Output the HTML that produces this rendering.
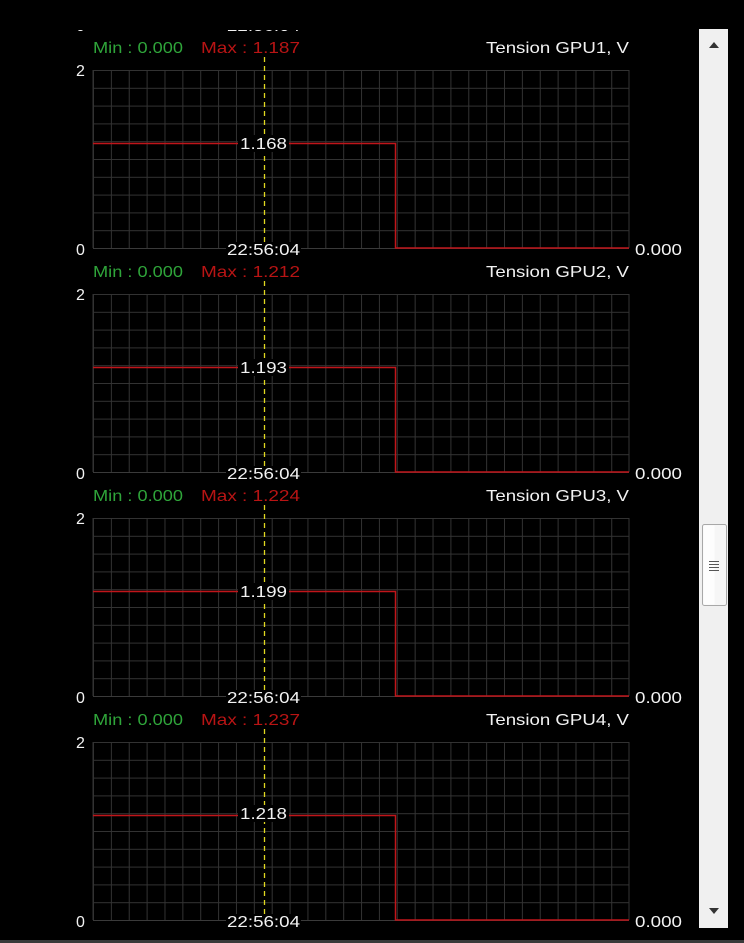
<!DOCTYPE html>
<html><head><meta charset="utf-8"><style>
html,body{margin:0;padding:0;background:#000;width:744px;height:943px;overflow:hidden}
svg{display:block}
text{font-family:"Liberation Sans",Arial,sans-serif;font-size:16px}
.mn{fill:#2fa53a}.mx{fill:#b81414}.w{fill:#f2f2f2}
</style></head><body>
<svg width="744" height="943" viewBox="0 0 744 943" xmlns="http://www.w3.org/2000/svg">
<defs>
<pattern id="g" x="93" y="70" width="17.87" height="17.8" patternUnits="userSpaceOnUse">
<path d="M0.5 0V17.8M0 0.5H17.87" stroke="#333" stroke-width="1" fill="none"/>
</pattern>
<clipPath id="c"><rect x="0" y="30" width="700" height="898"/></clipPath>
<g id="p">
<rect x="93" y="70" width="536" height="178" fill="url(#g)"/>
<line x1="93" y1="70" x2="93" y2="248" stroke="#333"/>
<line x1="629" y1="70" x2="629" y2="248" stroke="#333"/>
<line x1="93" y1="248.5" x2="629" y2="248.5" stroke="#3a3a3a"/>
<line x1="264.5" y1="57" x2="264.5" y2="246" stroke="#e0d820" stroke-width="1.3" stroke-dasharray="5,4"/>
<path d="M93 143.5H395.5V248H629" stroke="#c0151a" stroke-width="1.5" fill="none"/>
</g>
</defs>
<g clip-path="url(#c)">
<g transform="translate(0,-224)"><use href="#p"/>
<rect x="226" y="242" width="75" height="16" fill="#000"/>
<text x="76" y="255" class="w">0</text><text x="227" y="255" class="w" textLength="73" lengthAdjust="spacingAndGlyphs">22:56:04</text></g>

<use href="#p"/>
<text x="93" y="53" class="mn" textLength="90" lengthAdjust="spacingAndGlyphs">Min : 0.000</text><text x="201" y="53" class="mx" textLength="99" lengthAdjust="spacingAndGlyphs">Max : 1.187</text>
<text x="486" y="53" class="w" textLength="143" lengthAdjust="spacingAndGlyphs">Tension GPU1, V</text>
<text x="76" y="76" class="w">2</text>
<rect x="238" y="135" width="51" height="17" fill="#000"/><text x="240" y="149" class="w" textLength="47" lengthAdjust="spacingAndGlyphs">1.168</text>
<rect x="226" y="242" width="75" height="16" fill="#000"/>
<text x="76" y="255" class="w">0</text><text x="227" y="255" class="w" textLength="73" lengthAdjust="spacingAndGlyphs">22:56:04</text><text x="635" y="255" class="w" textLength="47" lengthAdjust="spacingAndGlyphs">0.000</text>

<g transform="translate(0,224)"><use href="#p"/>
<text x="93" y="53" class="mn" textLength="90" lengthAdjust="spacingAndGlyphs">Min : 0.000</text><text x="201" y="53" class="mx" textLength="99" lengthAdjust="spacingAndGlyphs">Max : 1.212</text>
<text x="486" y="53" class="w" textLength="143" lengthAdjust="spacingAndGlyphs">Tension GPU2, V</text>
<text x="76" y="76" class="w">2</text>
<rect x="238" y="135" width="51" height="17" fill="#000"/><text x="240" y="149" class="w" textLength="47" lengthAdjust="spacingAndGlyphs">1.193</text>
<rect x="226" y="242" width="75" height="16" fill="#000"/>
<text x="76" y="255" class="w">0</text><text x="227" y="255" class="w" textLength="73" lengthAdjust="spacingAndGlyphs">22:56:04</text><text x="635" y="255" class="w" textLength="47" lengthAdjust="spacingAndGlyphs">0.000</text></g>

<g transform="translate(0,448)"><use href="#p"/>
<text x="93" y="53" class="mn" textLength="90" lengthAdjust="spacingAndGlyphs">Min : 0.000</text><text x="201" y="53" class="mx" textLength="99" lengthAdjust="spacingAndGlyphs">Max : 1.224</text>
<text x="486" y="53" class="w" textLength="143" lengthAdjust="spacingAndGlyphs">Tension GPU3, V</text>
<text x="76" y="76" class="w">2</text>
<rect x="238" y="135" width="51" height="17" fill="#000"/><text x="240" y="149" class="w" textLength="47" lengthAdjust="spacingAndGlyphs">1.199</text>
<rect x="226" y="242" width="75" height="16" fill="#000"/>
<text x="76" y="255" class="w">0</text><text x="227" y="255" class="w" textLength="73" lengthAdjust="spacingAndGlyphs">22:56:04</text><text x="635" y="255" class="w" textLength="47" lengthAdjust="spacingAndGlyphs">0.000</text></g>

<g transform="translate(0,672)"><use href="#p"/>
<text x="93" y="53" class="mn" textLength="90" lengthAdjust="spacingAndGlyphs">Min : 0.000</text><text x="201" y="53" class="mx" textLength="99" lengthAdjust="spacingAndGlyphs">Max : 1.237</text>
<text x="486" y="53" class="w" textLength="143" lengthAdjust="spacingAndGlyphs">Tension GPU4, V</text>
<text x="76" y="76" class="w">2</text>
<rect x="238" y="133" width="51" height="17" fill="#000"/><text x="240" y="147" class="w" textLength="47" lengthAdjust="spacingAndGlyphs">1.218</text>
<rect x="226" y="242" width="75" height="16" fill="#000"/>
<text x="76" y="255" class="w">0</text><text x="227" y="255" class="w" textLength="73" lengthAdjust="spacingAndGlyphs">22:56:04</text><text x="635" y="255" class="w" textLength="47" lengthAdjust="spacingAndGlyphs">0.000</text></g>
</g>

<rect x="699" y="29" width="29" height="899" fill="#f0f0f0"/>
<path d="M709 48L714 42L719 48Z" fill="#333"/>
<path d="M709 908L714 914L719 908Z" fill="#333"/>
<rect x="702.5" y="524.5" width="24" height="81" rx="2" fill="#f6f6f6" stroke="#a8a8a8"/>
<rect x="703.5" y="525.5" width="11" height="79" fill="#fdfdfd"/>
<path d="M709 561.5h10M709 564.5h10M709 567.5h10M709 570.5h10" stroke="#555" stroke-width="1"/>
<rect x="0" y="940" width="744" height="3" fill="#3a3a3a"/>
</svg>
</body></html>
